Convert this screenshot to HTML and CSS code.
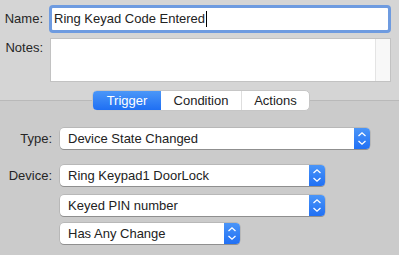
FILE: index.html
```html
<!DOCTYPE html>
<html>
<head>
<meta charset="utf-8">
<link rel="stylesheet" href="styles.css">
</head>
<body>
<div class="top">
  <div class="row name-row">
    <span class="label">Name:</span>
    <div class="focus"><div class="field">Ring Keyad Code Entered<span class="caret"></span></div></div>
  </div>
  <div class="row notes-row">
    <span class="label notes-label">Notes:</span>
    <div class="notes"><div class="notes-text"></div><div class="scroll"></div></div>
  </div>
</div>
<div class="bottom">
  <div class="tabs">
    <div class="seg sel">Trigger</div>
    <div class="seg">Condition</div>
    <div class="seg last">Actions</div>
  </div>
  <div class="form">
    <div class="frow type-row">
      <span class="flabel">Type:</span>
      <div class="popup w-type"><span class="ptext">Device State Changed</span><span class="arrow"><svg width="16" height="21" viewBox="0 0 16 21"><path d="M4.5 8 L8 4.8 L11.5 8 M4.5 13 L8 16.2 L11.5 13" fill="none" stroke="#fff" stroke-width="1.3"/></svg></span></div>
    </div>
    <div class="frow dev-row">
      <span class="flabel">Device:</span>
      <div class="popup w-dev"><span class="ptext">Ring Keypad1 DoorLock</span><span class="arrow"><svg width="16" height="21" viewBox="0 0 16 21"><path d="M4.5 8 L8 4.8 L11.5 8 M4.5 13 L8 16.2 L11.5 13" fill="none" stroke="#fff" stroke-width="1.3"/></svg></span></div>
    </div>
    <div class="frow pin-row">
      <span class="flabel"></span>
      <div class="popup w-dev"><span class="ptext">Keyed PIN number</span><span class="arrow"><svg width="16" height="21" viewBox="0 0 16 21"><path d="M4.5 8 L8 4.8 L11.5 8 M4.5 13 L8 16.2 L11.5 13" fill="none" stroke="#fff" stroke-width="1.3"/></svg></span></div>
    </div>
    <div class="frow chg-row">
      <span class="flabel"></span>
      <div class="popup w-chg"><span class="ptext">Has Any Change</span><span class="arrow"><svg width="16" height="21" viewBox="0 0 16 21"><path d="M4.5 8 L8 4.8 L11.5 8 M4.5 13 L8 16.2 L11.5 13" fill="none" stroke="#fff" stroke-width="1.3"/></svg></span></div>
    </div>
  </div>
</div>
</body>
</html>
```
FILE: styles.css
```css
html, body {
  margin: 0;
  padding: 0;
  width: 399px;
  height: 255px;
  overflow: hidden;
  font-family: "Liberation Sans", Arial, sans-serif;
  font-size: 13px;
  color: #262626;
  background: #cbcbcb;
}
.top {
  height: 100px;
  background: #d5d5d5;
  box-sizing: border-box;
  padding-top: 5px;
}
.row {
  display: flex;
  align-items: flex-start;
}
.label {
  width: 43px;
  text-align: right;
  margin-right: 6px;
}
.name-row .label {
  line-height: 28px;
}
.focus {
  width: 342px;
  height: 28px;
  box-sizing: border-box;
  border: 3px solid #6e9be0;
  border-radius: 4px;
  background: #fff;
}
.field {
  height: 22px;
  line-height: 22px;
  padding-left: 2px;
  color: #222;
  display: flex;
  align-items: center;
}
.caret {
  display: inline-block;
  width: 1px;
  height: 16px;
  background: #000;
  margin-left: 1px;
}
.notes-row {
  margin-top: 5px;
}
.notes-label {
  margin-right: 7px;
  padding-top: 2px;
}
.notes {
  width: 341px;
  height: 44px;
  box-sizing: border-box;
  border: 1px solid #c2c2c2;
  background: #fff;
  display: flex;
}
.notes-text {
  flex: 1;
}
.scroll {
  width: 14px;
  background: #f8f8f8;
  border-left: 1px solid #e4e4e4;
}
.bottom {
  border-top: 1px solid #b9b9b9;
  background: #cbcbcb;
  height: 154px;
}
.tabs {
  display: flex;
  width: 218px;
  height: 21px;
  box-sizing: border-box;
  margin: -11px 0 0 92px;
  background: #fff;
  border: 1px solid #c6c6c6;
  border-radius: 5px;
  overflow: hidden;
}
.seg {
  display: flex;
  align-items: center;
  justify-content: center;
  border-right: 1px solid #dedede;
  color: #222;
}
.seg:nth-child(1) { width: 68px; }
.seg:nth-child(2) { width: 80px; }
.seg.last { flex: 1; border-right: none; }
.seg.sel {
  background: linear-gradient(#4b97f8, #1f6ff3);
  color: #fff;
  border-right: none;
}
.form {
  display: flex;
  flex-direction: column;
}
.frow {
  display: flex;
  align-items: center;
}
.type-row { margin-top: 17px; }
.dev-row { margin-top: 16px; }
.pin-row { margin-top: 9px; }
.chg-row { margin-top: 7px; }
.flabel {
  width: 52px;
  text-align: right;
  margin-right: 8px;
}
.popup {
  height: 21px;
  box-sizing: border-box;
  display: flex;
  background: #fff;
  border-radius: 4px;
  box-shadow: 0 0 0 0.5px rgba(0,0,0,0.18), 0 1px 0 0 rgba(0,0,0,0.22);
  overflow: hidden;
}
.ptext {
  flex: 1;
  line-height: 21px;
  padding-left: 8px;
  color: #222;
}
.arrow {
  width: 16px;
  height: 21px;
  background: linear-gradient(#4a95f8, #2170f4);
  display: flex;
}
.w-type { width: 310px; }
.w-dev { width: 265px; }
.w-chg { width: 180px; }
```
